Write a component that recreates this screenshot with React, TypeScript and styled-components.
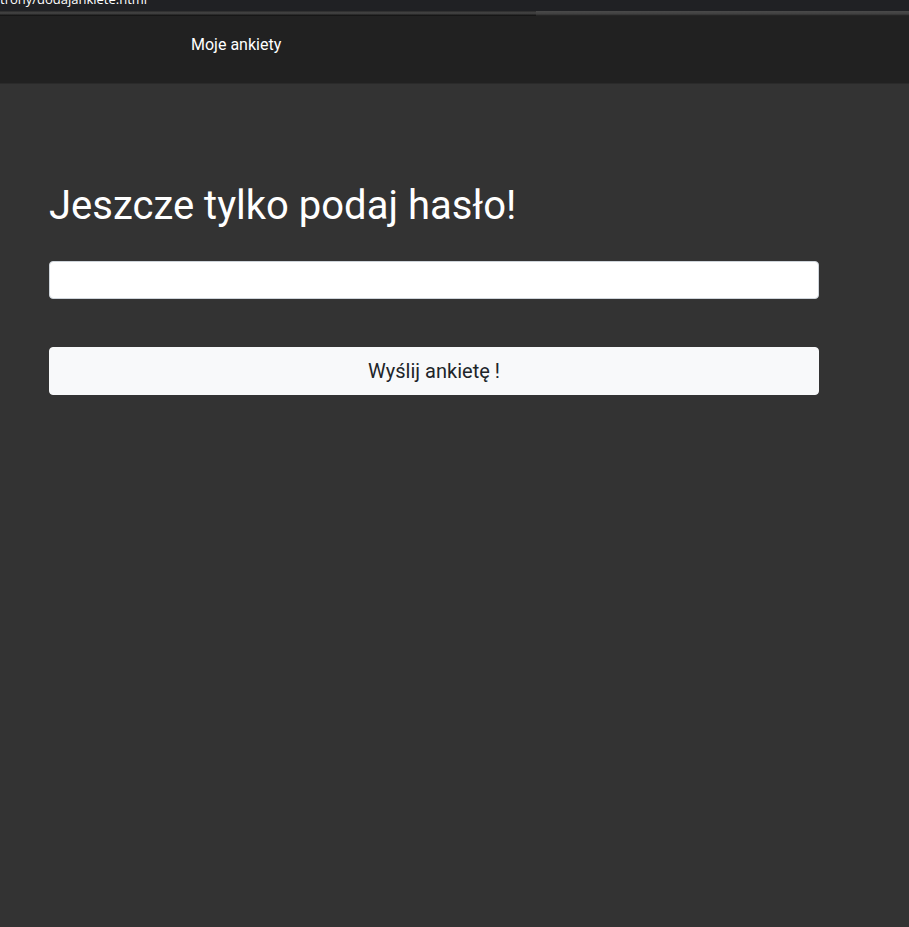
import React from "react";
import styled, { createGlobalStyle } from "styled-components";

const Global = createGlobalStyle`
  html, body { margin: 0; padding: 0; background: #333333; }
  body { font-family: Roboto, "Liberation Sans", sans-serif; }
  #root { min-height: 927px; background: #333333; }
`;

const BrowserStrip = styled.div`
  height: 11px;
  background: #202124;
  overflow: hidden;
`;

const UrlText = styled.div`
  font-family: "Open Sans", "Noto Sans", sans-serif;
  font-size: 13px;
  line-height: 13px;
  color: #ffffff;
  margin-top: -7px;
  white-space: nowrap;
`;

const Edge = styled.div`
  height: 5px;
  display: flex;
`;

const EdgeLeft = styled.div`
  width: 536px;
  background: linear-gradient(to bottom, #2a2a2a 0%, #474747 40%, #0c0c0c 100%);
`;

const EdgeRight = styled.div`
  flex: 1;
  background: linear-gradient(to bottom, #4a4a4a 0%, #404040 60%, #1c1c1c 100%);
`;

const Navbar = styled.nav`
  height: 68px;
  background: #212121;
  display: flex;
  align-items: center;
  padding-left: 191px;
  padding-bottom: 12px;
  box-sizing: border-box;
  border-bottom: 1px solid #2a2a2a;
`;

const NavLink = styled.a`
  color: #ffffff;
  font-size: 16px;
  text-decoration: none;
  padding-top: 2px;
`;

const Main = styled.main`
  padding: 98px 0 0 49px;
  width: 770px;
  display: flex;
  flex-direction: column;
`;

const Title = styled.h1`
  margin: 0 0 31px 0;
  font-size: 40px;
  font-weight: 400;
  line-height: 48px;
  color: #ffffff;
`;

const PasswordInput = styled.input`
  height: 38px;
  box-sizing: border-box;
  border: 1px solid #ced4da;
  border-radius: 4px;
  background: #ffffff;
  padding: 6px 12px;
  font-size: 16px;
  margin: 0 0 48px 0;
  width: 100%;
  outline: none;
`;

const SubmitButton = styled.button`
  height: 48px;
  width: 100%;
  border: 1px solid #f8f9fa;
  border-radius: 4px;
  background: #f8f9fa;
  color: #212529;
  font-family: Roboto, "Liberation Sans", sans-serif;
  font-size: 20px;
  cursor: pointer;
`;

export default function App() {
  return (
    <>
      <Global />
      <BrowserStrip>
        <UrlText>trony/dodajankiete.html</UrlText>
      </BrowserStrip>
      <Edge>
        <EdgeLeft />
        <EdgeRight />
      </Edge>
      <Navbar>
        <NavLink href="#">Moje ankiety</NavLink>
      </Navbar>
      <Main>
        <Title>Jeszcze tylko podaj hasło!</Title>
        <PasswordInput type="password" />
        <SubmitButton>Wyślij ankietę !</SubmitButton>
      </Main>
    </>
  );
}
